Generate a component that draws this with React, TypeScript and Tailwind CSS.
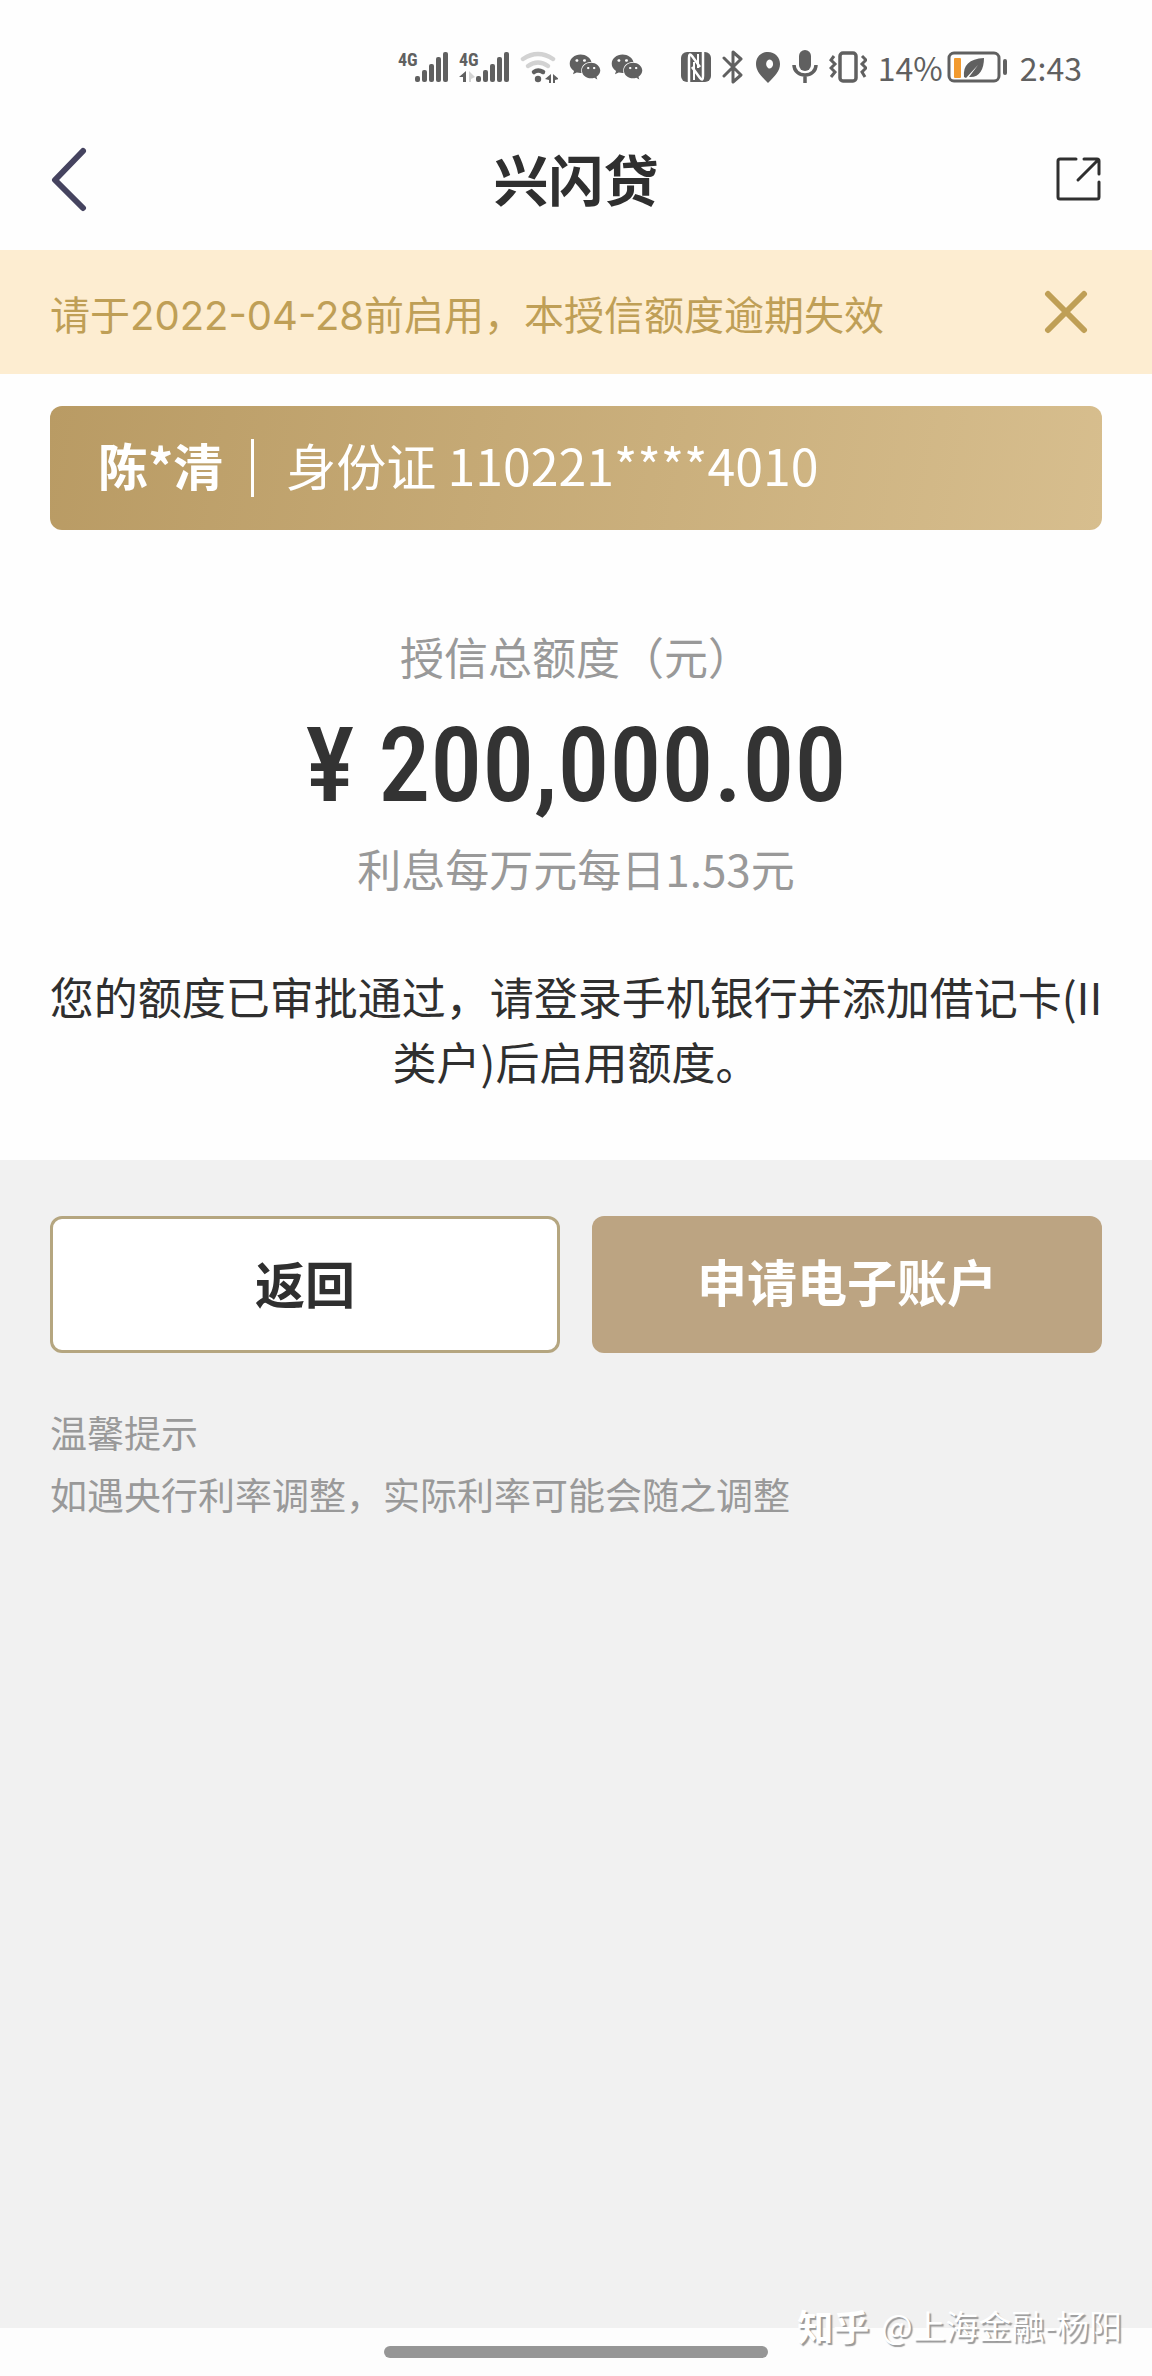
import type { ReactNode } from "react";
import { FaWeixin } from "react-icons/fa";

const NOTICE = "请于2022-04-28前启用，本授信额度逾期失效";

const bars = [
  { x: 17, y: 27 },
  { x: 24, y: 21 },
  { x: 31, y: 15 },
  { x: 38, y: 8 },
  { x: 45, y: 3 },
];

function StatusIcon({ width, children }: { width: number; children: ReactNode }) {
  return (
    <svg
      width={width}
      height={36}
      viewBox={`0 0 ${width} 36`}
      fill="none"
      stroke="none"
      aria-hidden="true"
      className="shrink-0"
    >
      {children}
    </svg>
  );
}

function Signal({ data = false }: { data?: boolean }) {
  return (
    <StatusIcon width={50}>
      <text x="0" y="17" fill="#606060" className="font-['Roboto_Condensed',Roboto,sans-serif] text-[18px] font-bold">
        4G
      </text>
      {bars.map((bar) => (
        <rect key={bar.x} x={bar.x} y={bar.y} width="5" height={33 - bar.y} rx="2" fill="#606060" />
      ))}
      {data && (
        <>
          <path d="M7 22v11H4v-5H0z" fill="#606060" />
          <path d="M10 22v11h2v-3l4-2z" fill="#d4d4d4" />
        </>
      )}
    </StatusIcon>
  );
}

function StatusBar() {
  return (
    <div className="flex h-[108px] items-center justify-end gap-[11px] pt-[26px] pr-[70px] text-[32px] text-[#606060]">
      <Signal />
      <Signal data />
      <StatusIcon width={38}>
        <path d="M3 10Q18 0 33 10" stroke="#d2d2d2" strokeWidth="4.5" strokeLinecap="round" />
        <path d="M8 17Q18 10 28 17" stroke="#d2d2d2" strokeWidth="4.5" strokeLinecap="round" />
        <path d="M14 23Q18 20 23 23" stroke="#606060" strokeWidth="4.5" strokeLinecap="round" />
        <circle cx="18" cy="30" r="3.2" fill="#606060" />
        <path d="M31 25v9h-2v-3l-4-1zM33 25v9h2v-3l4-1z" fill="#606060" />
      </StatusIcon>
      <div className="flex items-center gap-2.5">
        <FaWeixin size={32} aria-hidden="true" />
        <FaWeixin size={32} aria-hidden="true" />
      </div>
      <span className="w-4" />
      <StatusIcon width={30}>
        <rect x="0" y="3" width="30" height="30" rx="6" fill="#606060" />
        <path d="M8 34V9q0-6 3-2l8 11" stroke="#fff" strokeWidth="2.5" />
        <path d="M22 2v25q0 6-3 2L11 18" stroke="#fff" strokeWidth="2.5" />
        <path d="M13 13v18M17 5v14" stroke="#fff" strokeWidth="2" />
      </StatusIcon>
      <StatusIcon width={22}>
        <path d="M2 9l17 17-8 7V3l8 7L2 27" stroke="#606060" strokeWidth="3" strokeLinejoin="round" strokeLinecap="round" />
      </StatusIcon>
      <StatusIcon width={26}>
        <path
          d="M13 3C6 3 1 8 1 15c0 7 5 12 12 19 7-7 12-12 12-19 0-7-5-12-12-12zm0 8a3.5 4.500 0 1 1 0 8 3.500 4.500 0 0 1 0-8z"
          fill="#606060"
          fillRule="evenodd"
        />
      </StatusIcon>
      <StatusIcon width={26}>
        <rect x="7" y="1" width="12" height="21" rx="6" fill="#606060" />
        <path d="M2 16c0 6 5 10 11 10s11-4 11-10M13 26v8" stroke="#606060" strokeWidth="3.5" />
      </StatusIcon>
      <StatusIcon width={38}>
        <rect x="11" y="4" width="16" height="28" rx="3" stroke="#606060" strokeWidth="3.5" />
        <path d="M5 7l-3 4 4 4-4 4 4 4-4 5M33 7l4 4-4 4 4 4-4 4 3 5" stroke="#606060" strokeWidth="3" />
      </StatusIcon>
      <div className="flex items-center gap-1">
        <span>14%</span>
        <StatusIcon width={60}>
          <rect x="2" y="4" width="50" height="28" rx="5" stroke="#606060" strokeWidth="3" />
          <rect x="7" y="9" width="7" height="20" rx="1" fill="#f29a2e" />
          <path d="M17 28C16 16 22 10 37 9c0 12-5 20-15 19l9-12-12 13z" fill="#606060" />
          <rect x="56" y="10" width="4" height="16" rx="2" fill="#606060" />
        </StatusIcon>
      </div>
      <time className="pl-0.5">2:43</time>
    </div>
  );
}

function Header() {
  return (
    <header className="grid h-[142px] grid-cols-[1fr_auto_1fr] items-center px-[50px]">
      <button type="button" aria-label="返回上一页" className="justify-self-start">
        <svg width="38" height="66" viewBox="0 0 38 66" fill="none" aria-hidden="true">
          <path d="M33 5L5 34l28 28" stroke="#45435f" strokeWidth="6" strokeLinecap="round" strokeLinejoin="round" />
        </svg>
      </button>
      <h1 className="pb-1 text-[55px] leading-none font-bold text-[#2f2f2f]">兴闪贷</h1>
      <button type="button" aria-label="分享" className="justify-self-end">
        <svg width="46" height="46" viewBox="0 0 46 46" fill="none" aria-hidden="true">
          <path
            d="M20 3H4a2 2 0 0 0-2 2v36a2 2 0 0 0 2 2h37a2 2 0 0 0 2-2V26M28 3h13a2 2 0 0 1 2 2v13M42 4L22 24"
            stroke="#2f2f2f"
            strokeWidth="3"
            strokeLinecap="round"
          />
        </svg>
      </button>
    </header>
  );
}

export default function App() {
  return (
    <div className="flex min-h-screen flex-col bg-[#fefefe] font-['Noto_Sans_CJK_SC',sans-serif] text-[#2f2f2f]">
      <StatusBar />
      <Header />

      {/* Expiry notice */}
      <div className="flex h-[124px] items-center justify-between bg-[#fdedd1] pr-[64px] pl-[50px] text-[#bf9f56]">
        <p className="pt-2 font-[Inter,'Noto_Sans_CJK_SC',sans-serif] text-[40px]">{NOTICE}</p>
        <button type="button" aria-label="关闭">
          <svg width="44" height="44" viewBox="0 0 44 44" fill="none" aria-hidden="true">
            <path d="M4 4l36 36M40 4L4 40" stroke="currentColor" strokeWidth="6" strokeLinecap="round" />
          </svg>
        </button>
      </div>

      <main className="flex flex-1 flex-col">
        <section className="px-12 pt-8 pb-[66px] text-center text-[44px]">
          {/* Customer */}
          <div className="mx-0.5 flex h-[124px] items-center rounded-xl bg-linear-[100deg] from-[#b99b64] to-[#d7be8e] px-12 text-[50px] leading-none text-white">
            <strong className="pb-2 font-bold">陈*清</strong>
            <span className="mr-8 ml-7 h-[58px] w-[3px] bg-white" />
            <span className="pb-2">身份证 110221****4010</span>
          </div>

          {/* Credit limit */}
          <p className="mt-[94px] leading-[64px] text-[#999]">授信总额度（元）</p>
          <p className="mt-[18px] font-['Roboto_Condensed',Roboto,sans-serif] text-[104px] leading-[120px] font-medium text-[#333]">
            ¥ 200,000.00
          </p>
          <p className="mt-[10px] leading-[64px] text-[#999]">利息每万元每日1.53元</p>

          <p className="mt-[64px] leading-[65px]">
            您的额度已审批通过，请登录手机银行并添加借记卡(II类户)后启用额度。
          </p>
        </section>

        <section className="flex-1 bg-[#f1f1f1] px-[50px] pt-[56px]">
          <div className="grid grid-cols-2 gap-8 text-[50px] font-bold">
            <button type="button" className="h-[137px] rounded-xl border-3 border-[#b5a680] bg-white pb-1">
              返回
            </button>
            <button type="button" className="h-[137px] rounded-xl bg-[#bca482] pb-2 text-white">
              申请电子账户
            </button>
          </div>

          <div className="mt-12 text-[37px] leading-[62px] text-[#999]">
            <h2>温馨提示</h2>
            <p>如遇央行利率调整，实际利率可能会随之调整</p>
          </div>
        </section>
      </main>

      {/* Gesture bar */}
      <footer className="relative flex h-12 justify-center bg-[#fdfdfd] pt-[18px]">
        <div className="h-3 w-1/3 rounded-full bg-[#969696]" />
        <p className="absolute right-[30px] bottom-6 flex items-center gap-3 text-[33px] leading-[54px] text-white [text-shadow:2px_2px_1px_#999]">
          <strong className="text-[36px] font-bold">知乎</strong>
          <span>@上海金融-杨阳</span>
        </p>
      </footer>
    </div>
  );
}
